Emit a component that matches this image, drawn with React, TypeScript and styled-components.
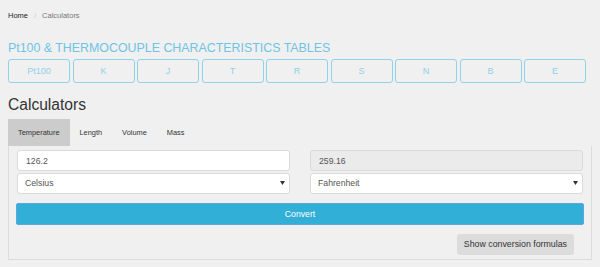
import React from 'react';
import styled, { createGlobalStyle } from 'styled-components';

const GlobalStyle = createGlobalStyle`
  body {
    margin: 0;
    background: #f0f0f0;
    font-family: "Liberation Sans", Arial, sans-serif;
    color: #333;
  }
`;

const Page = styled.div`
  padding: 0 8px;
`;

const Breadcrumb = styled.div`
  display: flex;
  align-items: center;
  gap: 6px;
  padding-top: 10px;
  font-size: 7.5px;
  line-height: 11px;
`;

const Crumb = styled.a<{ $active?: boolean }>`
  color: ${(p) => (p.$active ? '#777' : '#222')};
  text-decoration: none;
`;

const Slash = styled.span`
  color: #ccc;
`;

const Title = styled.h2`
  margin: 19px 0 0;
  font-size: 12.4px;
  line-height: 16px;
  font-weight: normal;
  color: #6fc3e5;
`;

const TableButtons = styled.div`
  display: flex;
  gap: 2.5px;
  margin-top: 3px;
`;

const TableButton = styled.button`
  width: 62px;
  height: 24px;
  box-sizing: border-box;
  background: transparent;
  border: 1px solid #8fd2ec;
  border-radius: 3px;
  color: #8fd0ea;
  font-family: inherit;
  font-size: 9px;
  padding: 0;
`;

const Heading = styled.h3`
  margin: 12px 0 0;
  font-size: 15.6px;
  line-height: 20px;
  font-weight: normal;
  color: #333;
`;

const TabBar = styled.div`
  display: flex;
  margin-top: 4px;
  height: 27px;
`;

const Tab = styled.div<{ $active?: boolean }>`
  padding: 0 10px;
  line-height: 27px;
  font-size: 7.4px;
  color: #333;
  background: ${(p) => (p.$active ? '#cccccc' : 'transparent')};
`;

const Panel = styled.div`
  border: 1px solid #dcdcdc;
  border-top: none;
  padding: 4px 8px 4px;
`;

const Columns = styled.div`
  display: grid;
  grid-template-columns: 1fr 1fr;
  column-gap: 20px;
`;

const Column = styled.div`
  display: flex;
  flex-direction: column;
  gap: 1px;
`;

const Field = styled.input<{ $readOnly?: boolean }>`
  box-sizing: border-box;
  height: 21px;
  width: 100%;
  border: 1px solid #dadada;
  border-radius: 3px;
  background: ${(p) => (p.$readOnly ? '#ebebeb' : '#fff')};
  padding: 0 8px;
  font-family: inherit;
  font-size: 8.7px;
  color: #555;
  outline: none;
`;

const SelectWrap = styled.div`
  position: relative;
`;

const Select = styled.select`
  appearance: none;
  box-sizing: border-box;
  height: 21px;
  width: 100%;
  border: 1px solid #dadada;
  border-radius: 3px;
  background: #fff;
  padding: 0 7px;
  font-family: inherit;
  font-size: 8.7px;
  color: #555;
  outline: none;
`;

const Caret = styled.svg`
  position: absolute;
  right: 5px;
  top: 9px;
  pointer-events: none;
`;

const ConvertButton = styled.button`
  display: block;
  box-sizing: border-box;
  width: calc(100% + 2px);
  margin: 9px -1px 0;
  height: 22px;
  background: #31afd6;
  border: 1px solid #5ea6e2;
  border-radius: 2px;
  color: #fff;
  font-family: inherit;
  font-size: 8.7px;
`;

const Footer = styled.div`
  display: flex;
  justify-content: flex-end;
  margin-top: 9px;
  padding-right: 9px;
`;

const FormulaButton = styled.button`
  height: 21px;
  padding: 0 7px;
  background: #dcdcdc;
  border: none;
  border-radius: 3px;
  color: #333;
  font-family: inherit;
  font-size: 8.8px;
`;

const tables = ['Pt100', 'K', 'J', 'T', 'R', 'S', 'N', 'B', 'E'];
const tabs = ['Temperature', 'Length', 'Volume', 'Mass'];
const units = ['Celsius', 'Fahrenheit', 'Kelvin'];

const UnitSelect: React.FC<{ value: string; options: string[] }> = ({ value, options }) => (
  <SelectWrap>
    <Select defaultValue={value}>
      {options.map((o) => (
        <option key={o}>{o}</option>
      ))}
    </Select>
    <Caret width="5" height="4" viewBox="0 0 5 4">
      <path d="M0 0h5L2.5 4z" fill="#333" />
    </Caret>
  </SelectWrap>
);

export default function App() {
  return (
    <Page>
      <GlobalStyle />
      <Breadcrumb>
        <Crumb href="#">Home</Crumb>
        <Slash>/</Slash>
        <Crumb $active>Calculators</Crumb>
      </Breadcrumb>
      <Title>Pt100 &amp; THERMOCOUPLE CHARACTERISTICS TABLES</Title>
      <TableButtons>
        {tables.map((t) => (
          <TableButton key={t}>{t}</TableButton>
        ))}
      </TableButtons>
      <Heading>Calculators</Heading>
      <TabBar>
        {tabs.map((t, i) => (
          <Tab key={t} $active={i === 0}>
            {t}
          </Tab>
        ))}
      </TabBar>
      <Panel>
        <Columns>
          <Column>
            <Field defaultValue="126.2" />
            <UnitSelect value="Celsius" options={units} />
          </Column>
          <Column>
            <Field $readOnly readOnly defaultValue="259.16" />
            <UnitSelect value="Fahrenheit" options={units} />
          </Column>
        </Columns>
        <ConvertButton>Convert</ConvertButton>
        <Footer>
          <FormulaButton>Show conversion formulas</FormulaButton>
        </Footer>
      </Panel>
    </Page>
  );
}
